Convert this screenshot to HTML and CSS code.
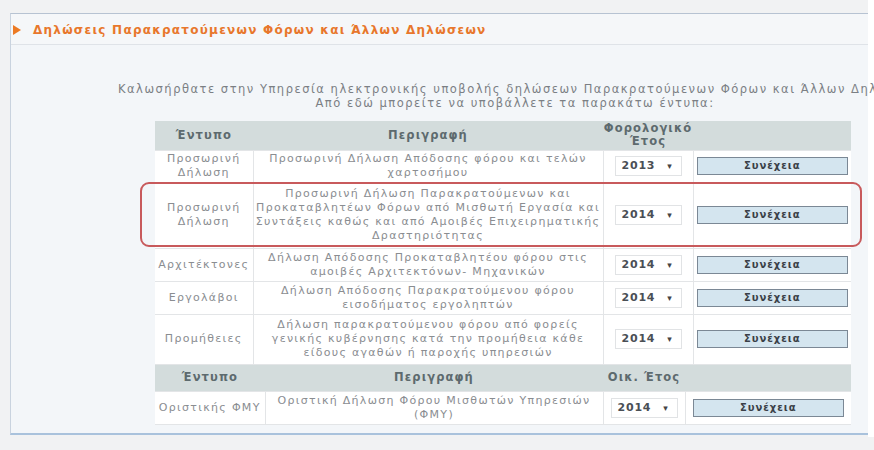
FILE: index.html
```html
<!DOCTYPE html>
<html lang="el">
<head>
<meta charset="utf-8">
<title>Δηλώσεις Παρακρατούμενων Φόρων</title>
<link rel="stylesheet" href="styles.css">
</head>
<body>
<div class="page">
  <div class="panel">
    <div class="panel-head">
      <span class="arrow"></span>
      <span class="title">Δηλώσεις Παρακρατούμενων Φόρων και Άλλων Δηλώσεων</span>
    </div>
    <div class="intro">Καλωσήρθατε στην Υπηρεσία ηλεκτρονικής υποβολής δηλώσεων Παρακρατούμενων Φόρων και Άλλων Δηλώσεων<br>Από εδώ μπορείτε να υποβάλλετε τα παρακάτω έντυπα:</div>

    <table class="forms">
      <colgroup><col class="c1"><col class="c2"><col class="c3"><col class="c4"></colgroup>
      <tr class="head">
        <th>Έντυπο</th><th>Περιγραφή</th><th>Φορολογικό<br>Έτος</th><th></th>
      </tr>
      <tr class="r1">
        <td>Προσωρινή<br>Δήλωση</td>
        <td>Προσωρινή Δήλωση Απόδοσης φόρου και τελών<br>χαρτοσήμου</td>
        <td><span class="sel">2013<span class="caret">▾</span></span></td>
        <td><span class="btn">Συνέχεια</span></td>
      </tr>
      <tr class="r2">
        <td>Προσωρινή<br>Δήλωση</td>
        <td>Προσωρινή Δήλωση Παρακρατούμενων και<br>Προκαταβλητέων Φόρων από Μισθωτή Εργασία και<br>Συντάξεις καθώς και από Αμοιβές Επιχειρηματικής<br>Δραστηριότητας</td>
        <td><span class="sel">2014<span class="caret">▾</span></span></td>
        <td><span class="btn">Συνέχεια</span></td>
      </tr>
      <tr class="r3">
        <td>Αρχιτέκτονες</td>
        <td>Δήλωση Απόδοσης Προκαταβλητέου φόρου στις<br>αμοιβές Αρχιτεκτόνων- Μηχανικών</td>
        <td><span class="sel">2014<span class="caret">▾</span></span></td>
        <td><span class="btn">Συνέχεια</span></td>
      </tr>
      <tr class="r4">
        <td>Εργολάβοι</td>
        <td>Δήλωση Απόδοσης Παρακρατούμενου φόρου<br>εισοδήματος εργοληπτών</td>
        <td><span class="sel">2014<span class="caret">▾</span></span></td>
        <td><span class="btn">Συνέχεια</span></td>
      </tr>
      <tr class="r5">
        <td>Προμήθειες</td>
        <td>Δήλωση παρακρατούμενου φόρου από φορείς<br>γενικής κυβέρνησης κατά την προμήθεια κάθε<br>είδους αγαθών ή παροχής υπηρεσιών</td>
        <td><span class="sel">2014<span class="caret">▾</span></span></td>
        <td><span class="btn">Συνέχεια</span></td>
      </tr>
    </table>
    <table class="forms final">
      <colgroup><col class="d1"><col class="d2"><col class="d3"><col class="d4"></colgroup>
      <tr class="head2">
        <th>Έντυπο</th><th>Περιγραφή</th><th>Οικ. Έτος</th><th></th>
      </tr>
      <tr class="r6">
        <td>Οριστικής ΦΜΥ</td>
        <td>Οριστική Δήλωση Φόρου Μισθωτών Υπηρεσιών<br>(ΦΜΥ)</td>
        <td><span class="sel">2014<span class="caret">▾</span></span></td>
        <td><span class="btn">Συνέχεια</span></td>
      </tr>
    </table>

    <div class="highlight"></div>
  </div>
</div>
</body>
</html>
```

FILE: styles.css
```css
html, body {
  margin: 0;
  padding: 0;
}
body {
  background: #f1f2f3;
  overflow: hidden;
  width: 874px;
  height: 450px;
  font-family: "DejaVu Sans", Verdana, sans-serif;
}
.page {
  padding: 13px 0 0 10px;
  background: linear-gradient(to right, #f1f2f3 0, #f1f2f3 868px, #ffffff 868px);
  height: 437px;
  box-sizing: border-box;
}
.panel {
  position: relative;
  width: 858px;
  height: 422px;
  box-sizing: border-box;
  background: #f3f6f9;
  border-top: 1px solid #b7c3d2;
  border-left: 1px solid #c9d3df;
  border-bottom: 2px solid #a9c2dc;
}
.panel-head {
  height: 31px;
  box-sizing: border-box;
  border-bottom: 1px solid #dfe3e8;
  background: #f5f7f9;
  display: flex;
  align-items: center;
  padding: 2px 0 0 2px;
}
.arrow {
  width: 0;
  height: 0;
  border-top: 5px solid transparent;
  border-bottom: 5px solid transparent;
  border-left: 8px solid #ec7a24;
  margin-right: 12px;
}
.title {
  color: #e8772c;
  font-weight: bold;
  font-size: 12px;
  letter-spacing: 1.25px;
}
.intro {
  margin: 37px 0 0 107px;
  width: 794px;
  text-align: center;
  white-space: nowrap;
  color: #7b7f84;
  font-size: 11.5px;
  letter-spacing: 1.5px;
  line-height: 14px;
}
.forms {
  margin-left: 144px;
  width: 696px;
  border-collapse: collapse;
  table-layout: fixed;
  font-size: 11px;
  letter-spacing: 1.3px;
  color: #8a8d91;
  background: #ffffff;
  white-space: nowrap;
}
.forms:first-of-type { margin-top: 11px; }
.c1 { width: 98px; }
.c2 { width: 350px; }
.c3 { width: 90px; }
.c4 { width: 158px; }
.d1 { width: 110px; }
.d2 { width: 338px; }
.d3 { width: 82px; }
.d4 { width: 166px; }
.forms th {
  background: #d3dcdc;
  color: #5d6a6e;
  font-weight: bold;
  font-size: 11.5px;
  letter-spacing: 1.1px;
  line-height: 13px;
  padding: 0;
  border: none;
}
.forms td {
  border: 1px solid #e3e5e7;
  text-align: center;
  line-height: 14px;
  padding: 0 1px;
}
.forms tr td:first-child { border-left: none; }
.forms tr td:last-child { border-right: none; }
.head { height: 29px; }
.r1 { height: 32px; }
.r2 { height: 66px; }
.r3 { height: 33px; }
.r4 { height: 33px; }
.r5 { height: 50px; }
.head2 { height: 27px; }
.r6 { height: 33px; }
.sel {
  display: inline-flex;
  align-items: center;
  justify-content: space-between;
  box-sizing: border-box;
  width: 67px;
  height: 20px;
  padding: 0 8px 0 6px;
  border: 1px solid #e1e3e5;
  background: #ffffff;
  color: #4a4f55;
  font-weight: bold;
  font-size: 11px;
  letter-spacing: 0.8px;
  vertical-align: middle;
}
.caret {
  font-size: 9px;
  color: #444;
}
.btn {
  display: inline-block;
  box-sizing: border-box;
  width: 151px;
  height: 18px;
  line-height: 16px;
  border: 1px solid #7b8895;
  background: #d4e5ef;
  color: #3a4047;
  font-weight: bold;
  font-size: 10px;
  letter-spacing: 1px;
  vertical-align: middle;
}
.highlight {
  position: absolute;
  left: 129px;
  top: 168px;
  width: 722px;
  height: 65px;
  box-sizing: border-box;
  border: 2px solid #c85a5c;
  border-radius: 9px;
}
```
